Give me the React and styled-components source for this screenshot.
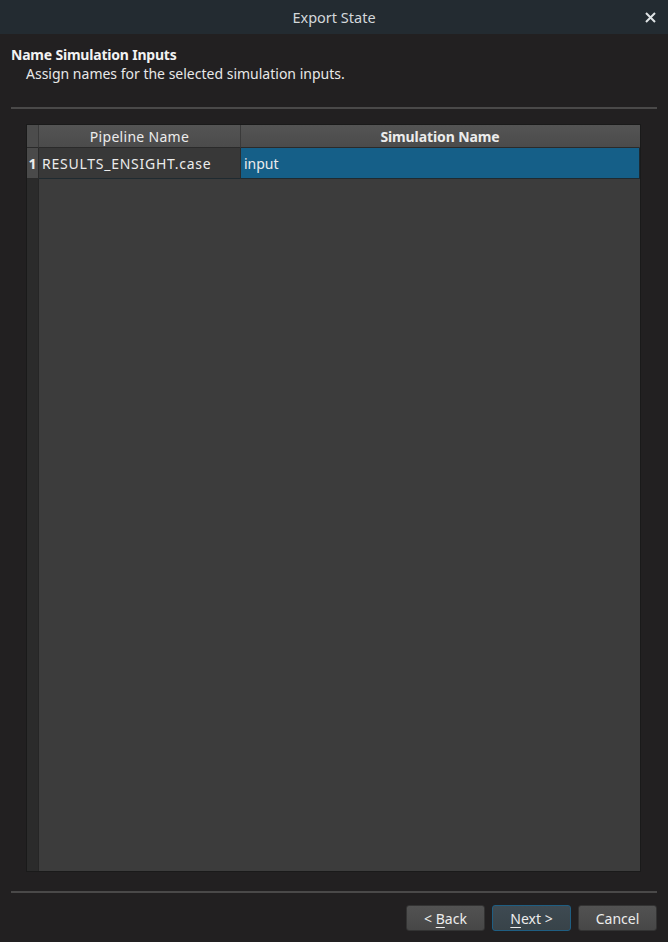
import React from "react";
import styled, { createGlobalStyle } from "styled-components";

const Global = createGlobalStyle`
  html, body { margin: 0; padding: 0; background: #222021; }
  body { font-family: "Noto Sans", "DejaVu Sans", sans-serif; }
  * { box-sizing: border-box; }
`;

const Window = styled.div`
  width: 668px;
  height: 942px;
  display: flex;
  flex-direction: column;
  background: #222021;
  color: #e6e6e6;
`;

const TitleBar = styled.div`
  height: 34px;
  flex: none;
  background: #232b31;
  display: flex;
  align-items: center;
  justify-content: center;
  position: relative;
  font-size: 14.5px;
  color: #d3d8db;
`;

const CloseBtn = styled.div`
  position: absolute;
  right: 12px;
  top: 12px;
  width: 11px;
  height: 11px;
  display: flex;
`;

const Header = styled.div`
  padding: 11px 11px 0 11px;
  display: flex;
  flex-direction: column;
  height: 73px;
`;

const Heading = styled.div`
  font-weight: 700;
  font-size: 14px;
  line-height: 19px;
  color: #f2f2f2;
  letter-spacing: -0.2px;
`;

const Sub = styled.div`
  font-size: 14px;
  line-height: 20px;
  padding-left: 15px;
  color: #e8e8e8;
`;

const Sep = styled.div`
  height: 2px;
  margin: 0 11px;
  background: #4a4949;
  flex: none;
`;

const Body = styled.div`
  flex: 1;
  padding: 15px 27px 19px 26px;
  display: flex;
`;

const Table = styled.div`
  flex: 1;
  border: 1px solid #1a1a1a;
  background: #3c3c3c;
  display: grid;
  grid-template-columns: 12px 202px 1fr;
  grid-template-rows: 23px 31px 1fr;
`;

const Corner = styled.div`
  background: #4c4c4c;
  border-right: 1px solid #3a3a3a;
  border-bottom: 1px solid #2a2a2a;
`;

const HeadCell = styled.div`
  background: linear-gradient(#545454, #4b4b4b);
  border-right: 1px solid ${(p) => (p.$last ? "transparent" : "#3a3a3a")};
  border-bottom: 1px solid #2a2a2a;
  display: flex;
  align-items: center;
  justify-content: center;
  font-size: 14px;
  font-weight: ${(p) => (p.$bold ? 700 : 400)};
  color: #ececec;
  letter-spacing: ${(p) => (p.$bold ? "-0.1px" : "0.3px")};
`;

const RowHead = styled.div`
  background: #4a4a4a;
  border-right: 1px solid #2a2a2a;
  border-bottom: 1px solid #2a2a2a;
  display: flex;
  align-items: center;
  justify-content: center;
  font-size: 14px;
  font-weight: 700;
  color: #ececec;
`;

const Cell = styled.div`
  background: ${(p) => (p.$selected ? "#155f88" : "#383838")};
  border-bottom: 1px solid #1f2a30;
  border-right: 1px solid ${(p) => (p.$selected ? "#1b2a33" : "#2c2c2c")};
  display: flex;
  align-items: center;
  padding-left: 3px;
  font-size: 14px;
  letter-spacing: ${(p) => p.$spacing || "0"};
  color: #ececec;
`;

const RowHeadFill = styled.div`
  background: #2b2b2b;
  border-right: 1px solid #262626;
`;

const Fill = styled.div`
  grid-column: 2 / 4;
  background: #3c3c3c;
`;

const Buttons = styled.div`
  display: flex;
  justify-content: flex-end;
  gap: 7px;
  padding: 12px 11px 11px 11px;
`;

const Button = styled.button`
  width: 79px;
  height: 26px;
  border-radius: 3px;
  border: 1px solid ${(p) => (p.$default ? "#1f5e82" : "#333")};
  background: ${(p) =>
    p.$default
      ? "linear-gradient(#3e4a52, #384349)"
      : "linear-gradient(#525252, #474747)"};
  color: #ececec;
  font-family: "Noto Sans", "DejaVu Sans", sans-serif;
  font-size: 14px;
  display: flex;
  align-items: center;
  justify-content: center;
  padding: 0;
  white-space: pre;
  u { text-decoration-thickness: 1px; text-underline-offset: 3px; }
`;

export default function App() {
  return (
    <>
      <Global />
      <Window>
        <TitleBar>
          Export State
          <CloseBtn>
            <svg width="11" height="11" viewBox="0 0 11 11">
              <path d="M1 1 L10 10 M10 1 L1 10" stroke="#dfe3e5" strokeWidth="2" strokeLinecap="butt" />
            </svg>
          </CloseBtn>
        </TitleBar>
        <Header>
          <Heading>Name Simulation Inputs</Heading>
          <Sub>Assign names for the selected simulation inputs.</Sub>
        </Header>
        <Sep />
        <Body>
          <Table>
            <Corner />
            <HeadCell>Pipeline Name</HeadCell>
            <HeadCell $bold $last>Simulation Name</HeadCell>
            <RowHead>1</RowHead>
            <Cell $spacing="0.75px">RESULTS_ENSIGHT.case</Cell>
            <Cell $selected>input</Cell>
            <RowHeadFill />
            <Fill />
          </Table>
        </Body>
        <Sep />
        <Buttons>
          <Button><span>{"< "}<u>B</u>ack</span></Button>
          <Button $default><span><u>N</u>{"ext >"}</span></Button>
          <Button><span>Cancel</span></Button>
        </Buttons>
      </Window>
    </>
  );
}
